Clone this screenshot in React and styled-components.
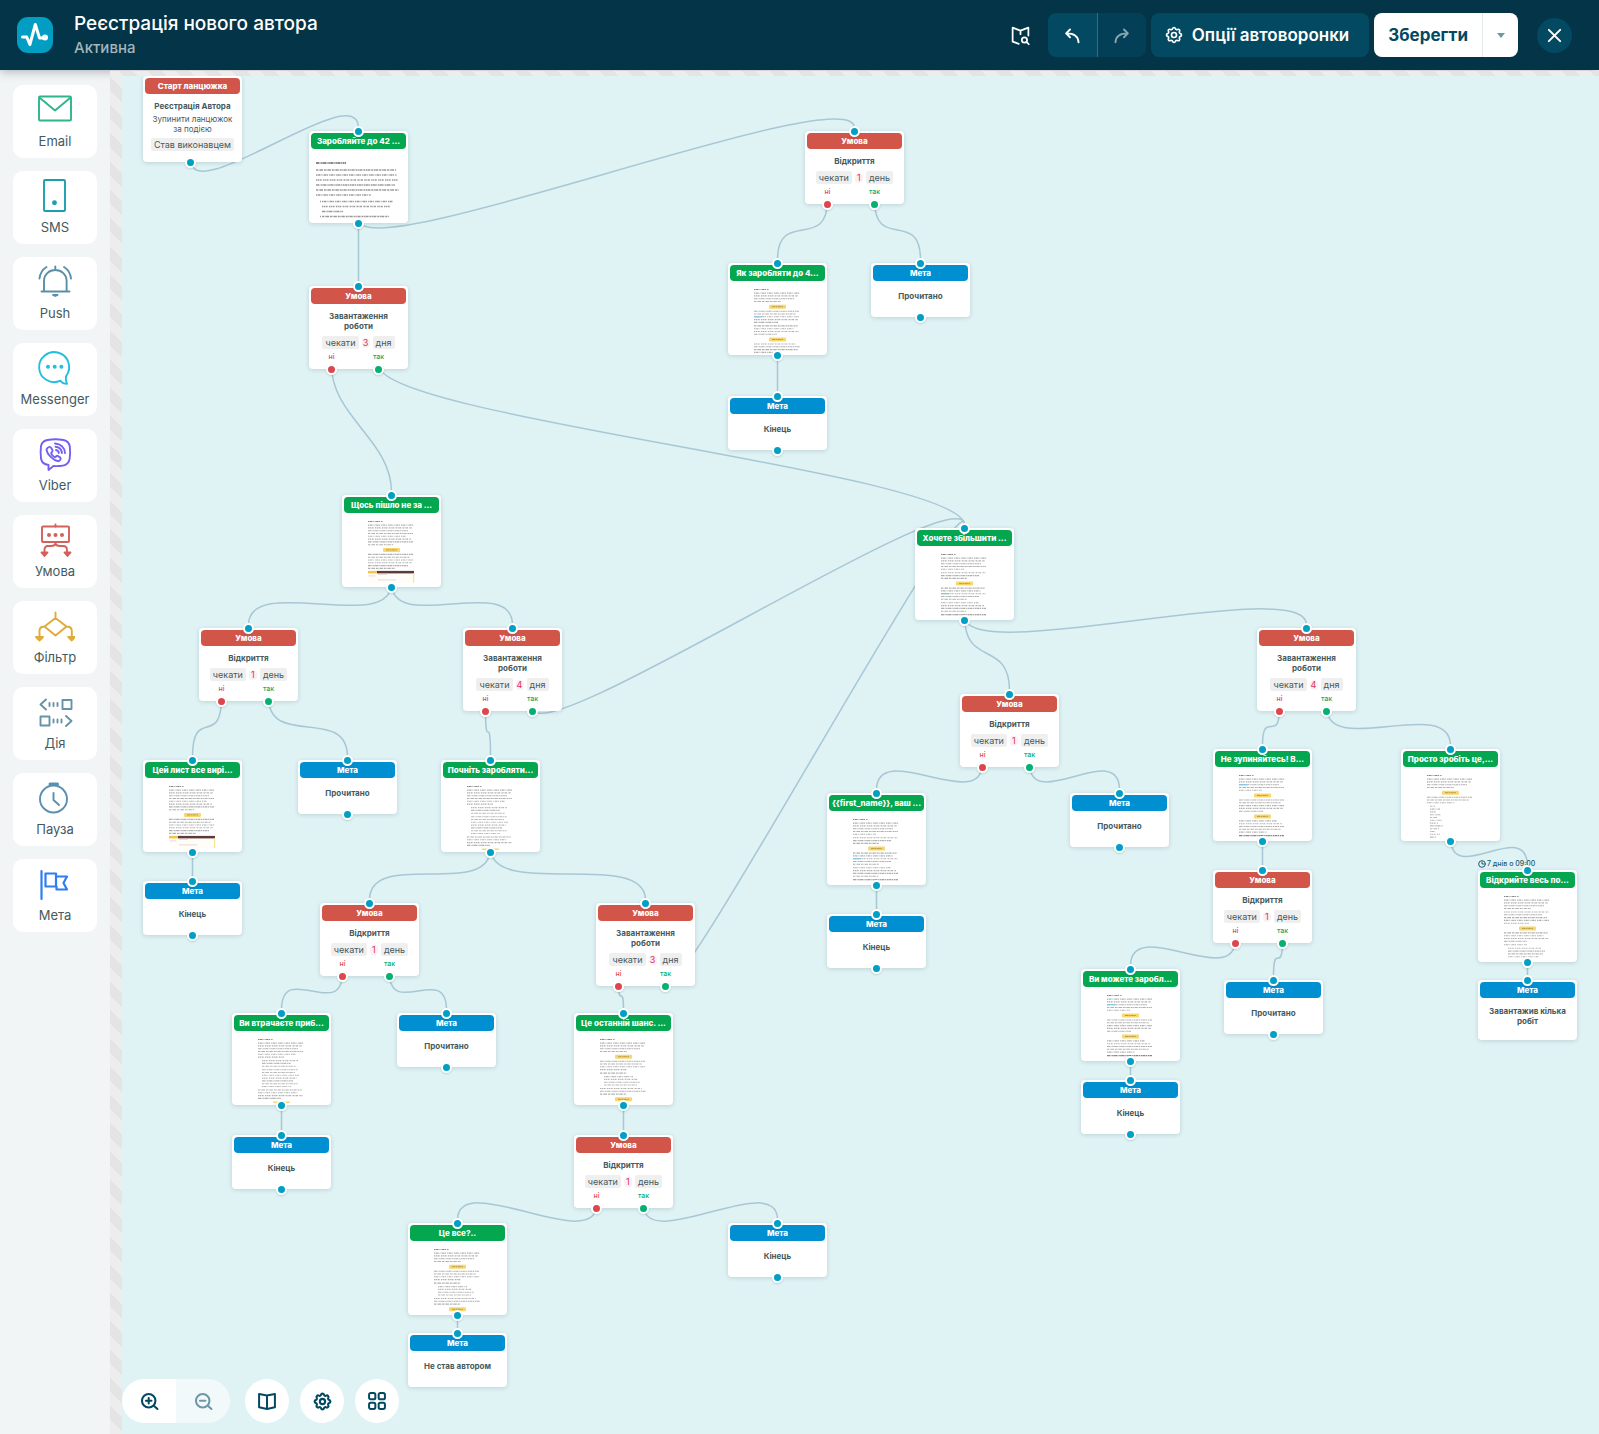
import React from 'react'
import styled, { createGlobalStyle } from 'styled-components'
import { TbSettings } from 'react-icons/tb'

const GlobalStyle = createGlobalStyle`
  * {
    box-sizing: border-box;
  }
  body {
    margin: 0;
    font-family: Inter, 'Noto Sans', sans-serif;
    color: #465a5e;
  }
  button {
    border: none;
    padding: 0;
    font-family: inherit;
    cursor: pointer;
  }
`

const Page = styled.div`
  display: flex;
  flex-direction: column;
  min-height: 100vh;
`

const Header = styled.header`
  position: relative;
  z-index: 1;
  display: flex;
  align-items: center;
  height: 70px;
  padding: 0 27px 0 17px;
  background: #033447;
  box-shadow: 0 1px 10px rgba(0, 0, 0, 0.3);
`

const Heading = styled.div`
  flex: 1;
  margin-left: 21px;
`

const Title = styled.h1`
  margin: 0;
  font-size: 19px;
  line-height: 26px;
  font-weight: 500;
  color: #fff;
`

const Status = styled.div`
  font-size: 15px;
  line-height: 22px;
  font-weight: 500;
  color: #a5b6bd;
`

const HeaderActions = styled.div`
  display: flex;
  align-items: center;
  gap: 5px;
`

const GhostButton = styled.button`
  display: flex;
  margin-right: 12px;
  background: none;
  color: #fff;
`

const ButtonGroup = styled.div`
  display: flex;
  height: 44px;
  border-radius: 8px;
  overflow: hidden;
`

const HistoryButton = styled.button`
  display: flex;
  align-items: center;
  justify-content: center;
  width: 49px;
  background: ${(p) => (p.disabled ? '#034058' : '#034961')};
  color: ${(p) => (p.disabled ? '#8ba4ae' : '#fff')};
  & + & {
    border-left: 1px solid #3b6a7d;
  }
`

const OptionsButton = styled.button`
  display: flex;
  align-items: center;
  gap: 8px;
  height: 44px;
  padding: 0 20px 0 13px;
  border-radius: 8px;
  background: #034961;
  color: #fff;
  font-size: 17px;
  font-weight: 600;
`

const SaveButton = styled.button`
  padding: 0 14px;
  background: #fff;
  color: #034961;
  font-size: 17px;
  font-weight: 700;
`

const SaveMenuButton = styled.button`
  display: flex;
  align-items: center;
  justify-content: center;
  width: 36px;
  background: #fff;
  border-left: 1px solid #e4eaec;
  color: #6f97a6;
`

const CloseButton = styled.button`
  display: flex;
  align-items: center;
  justify-content: center;
  width: 35px;
  height: 35px;
  margin-left: 14px;
  border-radius: 50%;
  background: #034961;
  color: #fff;
`

const Body = styled.div`
  flex: 1;
  display: flex;
`

const Sidebar = styled.nav`
  display: flex;
  flex-direction: column;
  gap: 13px;
  width: 110px;
  padding: 15px 13px;
  background: #f1f5f6;
`

const Tool = styled.button`
  display: flex;
  flex-direction: column;
  align-items: center;
  height: 73px;
  padding-top: 4px;
  border-radius: 10px;
  background: #fff;
  color: #465a5e;
  font-size: 13px;
  line-height: 24px;
  svg {
    color: ${(p) => p.$color};
  }
`

const Workspace = styled.main`
  position: relative;
  z-index: 2;
  flex: 1;
  display: flex;
  min-width: 0;
  padding: 5px 0 0 12px;
  margin-top: 1px;
  background: repeating-linear-gradient(45deg, #ededed 0 10px, #e4e4e4 10px 20px);
`

const Canvas = styled.div`
  position: relative;
  flex: 1;
  min-height: 1340px;
  overflow: hidden;
  background: #dff2f4;
`

const Links = styled.svg`
  position: absolute;
  inset: 0;
  width: 100%;
  height: 100%;
  fill: none;
  stroke: #a8c7d5;
  stroke-width: 1.5;
`

const Card = styled.article`
  position: absolute;
  width: 99px;
  padding: 2px;
  border-radius: 4px;
  background: #fff;
  box-shadow: 0 1px 4px rgba(40, 80, 90, 0.18);
  text-align: center;
`

const barColors = {
  start: '#d25549',
  condition: '#d25549',
  email: '#05a650',
  goal: '#008fd0',
}

const Bar = styled.h2`
  margin: 0;
  height: 16px;
  border-radius: 4px;
  background: ${(p) => barColors[p.$type]};
  color: #fff;
  font-size: 8px;
  line-height: 16px;
  font-weight: 800;
  white-space: nowrap;
`

const CardTitle = styled.div`
  font-size: 8px;
  line-height: 10px;
  font-weight: 700;
`

const CardText = styled.div`
  margin-top: 3px;
  padding: 0 2px;
  font-size: 8px;
  line-height: 10px;
`

const GoalBody = styled.div`
  display: flex;
  align-items: center;
  justify-content: center;
  min-height: 36px;
  padding: 8px 4px 14px;
  margin-bottom: -2px;
`

const StartBody = styled.div`
  padding: 7px 2px 9px;
`

const ConditionBody = styled.div`
  padding: 7px 0 6px;
`

const ChipRow = styled.div`
  display: flex;
  align-items: center;
  justify-content: center;
  gap: 3px;
  margin-top: ${(p) => p.$top}px;
`

const Chip = styled.span`
  padding: 0 3px;
  border-radius: 2px;
  background: #efefef;
  font-size: 9px;
  line-height: 13px;
`

const Count = styled.span`
  width: 8px;
  border-radius: 4px;
  background: #faeff2;
  color: #dc2f5e;
  font-size: 9px;
  line-height: 10px;
`

const Branches = styled.div`
  display: grid;
  grid-template-columns: 41px 53px;
  margin-top: 4px;
  font-size: 7px;
  line-height: 8px;
  font-weight: 500;
`

const Branch = styled.span`
  color: ${(p) => (p.$yes ? '#0cab6c' : '#dc4a50')};
`

const Dot = styled.i`
  position: absolute;
  left: ${(p) => p.$x}px;
  ${(p) => (p.$top ? 'top: -5px' : 'bottom: -6px')};
  width: 11px;
  height: 11px;
  margin-left: -5px;
  border: 2px solid #fff;
  border-radius: 50%;
  background: ${(p) => p.$color || '#009fc3'};
  box-shadow: 0 1px 2px rgba(40, 80, 90, 0.18);
`

const Schedule = styled.div`
  position: absolute;
  left: 0;
  bottom: 100%;
  display: flex;
  align-items: center;
  gap: 1px;
  color: #1c5a70;
  font-size: 7px;
  line-height: 13px;
  font-weight: 500;
  white-space: nowrap;
`

const Preview = styled.svg`
  display: block;
  width: 95px;
  height: 72px;
`

const BottomBar = styled.div`
  position: absolute;
  left: 0;
  bottom: 11px;
  display: flex;
  gap: 11px;
`

const ZoomGroup = styled.div`
  display: flex;
  margin-right: 4px;
  border-radius: 22px;
  overflow: hidden;
`

const ZoomButton = styled.button`
  display: flex;
  align-items: center;
  justify-content: center;
  width: 54px;
  height: 44px;
  background: ${(p) => (p.disabled ? '#f1f9fb' : '#fff')};
  color: ${(p) => (p.disabled ? '#6f97a6' : '#034961')};
`

const RoundButton = styled.button`
  display: flex;
  align-items: center;
  justify-content: center;
  width: 44px;
  height: 44px;
  border-radius: 50%;
  background: #fff;
  color: #034961;
`

const Svg = ({ size = 24, box = 24, stroke = 2, children }) => (
  <svg
    width={size}
    height={size}
    viewBox={`0 0 ${box} ${box}`}
    fill="none"
    stroke="currentColor"
    strokeWidth={stroke}
    strokeLinecap="round"
    strokeLinejoin="round"
    aria-hidden="true"
  >
    {children}
  </svg>
)

const ToolIcon = ({ children }) => (
  <Svg size={40} box={40} stroke={1.9}>
    {children}
  </Svg>
)

const Logo = () => (
  <svg width="36" height="36" viewBox="0 0 36 36" aria-hidden="true">
    <rect width="36" height="36" rx="11" fill="#019dc3" />
    <path
      d="M5.500 20h4.200l3.200 7.500 5.400-20 4.200 13.500h6"
      fill="none"
      stroke="#fff"
      strokeWidth="3"
      strokeLinecap="round"
      strokeLinejoin="round"
    />
    <circle cx="28" cy="20.500" r="3" fill="#fff" />
  </svg>
)

const tools = [
  {
    name: 'Email',
    color: '#2fb58c',
    icon: (
      <>
        <rect x="4" y="7.500" width="32" height="24" rx="1" />
        <path d="M5 9l15 12.500L35 9" />
      </>
    ),
  },
  {
    name: 'SMS',
    color: '#1a9fae',
    icon: (
      <>
        <rect x="9" y="5" width="21" height="31" rx="1" />
        <circle cx="19.500" cy="27.700" r="1.500" fill="currentColor" />
      </>
    ),
  },
  {
    name: 'Push',
    color: '#5b8fa8',
    icon: (
      <>
        <path d="M9 30V19.500a11.300 10.500 0 0 1 22.600 0V30M6.500 30.500h28M20.300 5.500v3.300" />
        <path d="M4.500 17.500C5 12.500 7.500 8.500 11.500 6M36 17.500C35.500 12.500 33 8.500 29 6" />
        <path d="M18 34h4.600l-2.300 1z" fill="currentColor" />
      </>
    ),
  },
  {
    name: 'Messenger',
    color: '#1fbfe0',
    icon: (
      <>
        <path d="M25.500 33.700A15 15 0 1 1 31 29.300C30.500 31.500 30.800 34 32 36.800C29.500 36.800 27 36 25.500 33.700z" />
        <g fill="currentColor" stroke="none">
          <circle cx="13" cy="19.700" r="2" />
          <circle cx="19.700" cy="19.700" r="2" />
          <circle cx="26.400" cy="19.700" r="2" />
        </g>
      </>
    ),
  },
  {
    name: 'Viber',
    color: '#7360f2',
    icon: (
      <>
        <path d="M12.500 7C17 6.200 24 6.200 28.500 7C32.500 8 34.300 10 34.800 13.500C35.300 18 35.300 22 34.600 26C33.800 30 31.800 32 28 32.600C24.500 33.100 21.500 33.200 18.500 33L13.500 37V32C9 31.500 6.700 29.500 6 25.500C5.500 21.500 5.500 17 6 13C6.700 9.500 8.500 7.700 12.500 7z" />
        <path d="M12.400 15.200C14 13.400 15.200 13.500 16.400 15.200L17.400 16.900C18.300 18.500 16.400 19.200 16.200 20.200C16.700 22.200 18 23.600 19.800 24.200C21 24 21.600 22.200 23 23L25.300 24.600C26.600 25.900 24.800 27.900 23.200 28.200C18 27.200 12.300 21.500 11.500 17C11.500 16.300 11.900 15.800 12.400 15.200z" />
        <path d="M20 10.500C25.500 10.800 29.500 14.500 30 20M20.500 13.700C24 14 26.500 16.300 27 20M21 17C22.600 17.200 23.600 18.200 23.800 20" />
      </>
    ),
  },
  {
    name: 'Умова',
    color: '#d4605c',
    icon: (
      <>
        <rect x="7" y="7.500" width="27" height="15.500" rx="1" />
        <path d="M20.500 5.500v2M20.500 23v1.500C20 27 18.500 27 16 27h-3C10.500 27 9.500 28.500 9.500 31v3M20.500 24.500C21 27 22.500 27 25 27h3C30.500 27 32 28.500 32 31v3" />
        <path d="M6.500 33.500h6l-3 3.500zM29.500 33.500h6l-3 3.500z" fill="currentColor" />
        <g fill="currentColor" stroke="none">
          <circle cx="14" cy="16" r="2" />
          <circle cx="20.500" cy="16" r="2" />
          <circle cx="27" cy="16" r="2" />
        </g>
      </>
    ),
  },
  {
    name: 'Фільтр',
    color: '#e0ab38',
    icon: (
      <>
        <path d="M20.500 7.500V13L31.500 21.500L20.500 30.500L9.500 21.500L20.500 13M9.500 21.500C6 21.500 4.500 23 4.500 26V32M31.500 21.500C35 21.500 36.800 23 36.800 26V32" />
        <path d="M1 32h7l-3.500 3.500zM33.300 32h6.500l-3 3.500z" fill="currentColor" />
      </>
    ),
  },
  {
    name: 'Дія',
    color: '#6593a8',
    icon: (
      <>
        <path d="M11 8.500L5.500 13.500L11 18.500M31 25L36.500 30L31 35M14.500 12v3M18.500 12v3M22.500 12v3M18.500 28.500v3M22.500 28.500v3M26.500 28.500v3" />
        <rect x="27.500" y="9" width="9" height="9" />
        <rect x="5.500" y="25.500" width="9" height="9" />
      </>
    ),
  },
  {
    name: 'Пауза',
    color: '#5b8fb0',
    icon: (
      <>
        <circle cx="18.500" cy="22" r="13.500" />
        <path d="M18.500 16v7l5.500 5" />
        <path d="M15 7h7.500" strokeWidth="3" />
      </>
    ),
  },
  {
    name: 'Мета',
    color: '#2f7df0',
    icon: (
      <>
        <path d="M6.500 8v28" strokeWidth="2.200" />
        <path d="M10.500 10.500H21v13H10.500zM21 13.500H32L28.500 20L32 26.500H21.500V23.500" strokeWidth="2.200" />
      </>
    ),
  },
]

const UndoIcon = () => (
  <Svg size={17}>
    <path d="M8.500 3.500L3 9l5.500 5.500M3.500 9C13.500 9 20 13 20.500 21.500" strokeWidth="2.700" />
  </Svg>
)

const RedoIcon = () => (
  <Svg size={17}>
    <path d="M15.500 3.500L21 9l-5.500 5.500M20.500 9C10.500 9 4 13 3.500 21.500" strokeWidth="2.700" />
  </Svg>
)

const MapSearchIcon = () => (
  <Svg size={21}>
    <path d="M10 21.500L3 19V3l9 3.500L21 3v9M12 6.500v4" />
    <circle cx="16.500" cy="17" r="3" />
    <path d="M19 19.500l2.500 2.500" />
  </Svg>
)

const BookIcon = () => (
  <Svg size={20} stroke={2.4}>
    <path d="M12 5.500L2.500 3.500v16l9.500 2 9.500-2v-16zM12 5.500v16" />
  </Svg>
)

const GridIcon = () => (
  <Svg size={20} stroke={2.4}>
    <rect x="2.500" y="2.500" width="7.500" height="7.500" rx="2" />
    <rect x="14" y="2.500" width="7.500" height="7.500" rx="2" />
    <rect x="2.500" y="14" width="7.500" height="7.500" rx="2" />
    <rect x="14" y="14" width="7.500" height="7.500" rx="2" />
  </Svg>
)

const ZoomIcon = ({ plus }) => (
  <Svg size={19} stroke={2.6}>
    <circle cx="11" cy="11" r="8.500" />
    <path d={plus ? 'M17.500 17.500L22 21.500M7.500 11h7M11 7.500v7' : 'M17.500 17.500L22 21.500M7.500 11h7'} />
  </Svg>
)

// Letter thumbnails: h = heading, p = paragraph, l = list, b = button, n = note, t = table.
const letters = {
  how: ['h', 'p4', 'b', 'p5+', 'p4', 'b', 'p4'],
  wrong: ['h', 'p8', 'b', 'p6', 't'],
  begin: ['h', 'p6', 'l3', 'l7', 'p4', 'b'],
  want: ['h', 'p5', 'p3', 'b', 'p5+', 'p4', 'n'],
  stop: ['h', 'p5+', 'b', 'p5', 'b', 'p5', 'n'],
  simple: ['h', 'p4', 'b', 'p3', 's12'],
  open: ['h', 'p4', 'p5', 'b', 'p4', 'p1', 'l4'],
  last: ['h', 'p4', 'b', 'p4', 'p1', 'l4', 'p3', 'b'],
}

const dashes = ['2 .6 1 .4 3 .9', '1 .5 2.500 .5 1 1.100', '1.500 .5 1 .6 2 1.300', '3 .5 1 .7 1.500 .4']
const widths = [43, 45, 42, 46, 44, 40, 45, 38]

const LetterPreview = ({ kind }) => {
  const shapes = []
  let y = 8.5
  const line = (x, w, color, n) =>
    shapes.push(
      <line key={shapes.length} x1={x} x2={x + w} y1={y} y2={y} stroke={color} strokeDasharray={dashes[n % 4]} />
    )

  if (kind === 'first') {
    y = 14
    line(5, 30, '#666', 3)
    ;[80, 81, 82, 79, 83, 55].forEach((w, i) => {
      y = 21 + i * 5
      line(5, w, '#9a9a9a', i)
    })
    ;[71, 69, 21, 67].forEach((w, i) => {
      y = 52.5 + i * 5
      line(11, w, '#9a9a9a', i + 1)
    })
    return (
      <Preview viewBox="0 0 95 72" strokeWidth="1.400">
        {shapes}
        <path d="M9 52.500h1M9 67.500h1" stroke="#9a9a9a" />
      </Preview>
    )
  }

  letters[kind].forEach((block, b) => {
    const type = block[0]
    const count = parseInt(block.slice(1), 10) || 1
    if (type === 'h') {
      line(24, 15, '#888', 1)
      y += 3.6
    } else if (type === 'n') {
      line(24, 45, '#888', 3)
      y += 3.6
    } else if (type === 'b') {
      y += 1.7
      shapes.push(<rect key={shapes.length} x="39" y={y - 2} width="17" height="4" rx=".8" fill="#f8d86e" />)
      shapes.push(
        <line key={shapes.length} x1="42" x2="53" y1={y} y2={y} stroke="#b89d4c" strokeWidth="1" strokeDasharray="3 .5 2 .4" />
      )
      y += 4.5
    } else if (type === 't') {
      shapes.push(
        <g key={shapes.length}>
          <rect x="24" y={y - 1} width="46" height="12" fill="#fffdf8" />
          <rect x="24" y={y - 1} width="9" height="2.500" fill="#f6c544" />
          <rect x="33" y={y - 1} width="37" height="2.500" fill="#5c3b38" />
          <path d={`M24.500 ${y + 4}h7M34 ${y + 2.5}h9M34 ${y + 8}h18`} stroke="#e3cfcf" strokeWidth=".8" />
          <path d={`M69.700 ${y + 1}v10`} stroke="#f6d362" strokeWidth=".8" />
        </g>
      )
    } else {
      for (let i = 0; i < count; i++) {
        const w = widths[(i + b * 3) % 8]
        if (type === 'l') line(28, w - 9, '#b8b8b8', i + b)
        else if (type === 's') line(27, 5 + ((i * 5) % 9), '#b8b8b8', i + b)
        else line(24, i === count - 1 ? w * 0.6 : w, '#b0b0b0', i + b)
        if (block.endsWith('+') && i === 2) {
          shapes.push(<path key={shapes.length} d={`M24 ${y}h8`} stroke="#7cc4e6" />)
        }
        y += 2.8
      }
      y += 0.7
    }
  })
  return (
    <Preview viewBox="0 0 95 72" strokeWidth="1.100">
      {shapes}
    </Preview>
  )
}

const nodes = {
  start: { type: 'start', x: 21, y: 0, title: 'Старт ланцюжка' },
  earn: { type: 'email', x: 187, y: 55, title: 'Заробляйте до 42 ...', letter: 'first' },
  upload: { type: 'condition', x: 187, y: 210, upload: true, wait: 3 },
  opened: { type: 'condition', x: 683, y: 55, wait: 1 },
  how: { type: 'email', x: 606, y: 187, title: 'Як заробляти до 4...', letter: 'how' },
  howRead: { type: 'goal', x: 749, y: 187, text: 'Прочитано' },
  howEnd: { type: 'goal', x: 606, y: 320, text: 'Кінець' },
  wrong: { type: 'email', x: 220, y: 419, title: 'Щось пішло не за ...', letter: 'wrong' },
  wrongOpened: { type: 'condition', x: 77, y: 552, wait: 1 },
  wrongUpload: { type: 'condition', x: 341, y: 552, upload: true, wait: 4 },
  letter: { type: 'email', x: 21, y: 684, title: 'Цей лист все вирі...', letter: 'wrong' },
  letterRead: { type: 'goal', x: 176, y: 684, text: 'Прочитано' },
  letterEnd: { type: 'goal', x: 21, y: 805, text: 'Кінець' },
  begin: { type: 'email', x: 319, y: 684, title: 'Почніть заробляти...', letter: 'begin' },
  beginOpened: { type: 'condition', x: 198, y: 827, wait: 1 },
  beginUpload: { type: 'condition', x: 474, y: 827, upload: true, wait: 3 },
  lose: { type: 'email', x: 110, y: 937, title: 'Ви втрачаєте приб...', letter: 'begin' },
  loseRead: { type: 'goal', x: 275, y: 937, text: 'Прочитано' },
  loseEnd: { type: 'goal', x: 110, y: 1059, text: 'Кінець' },
  last: { type: 'email', x: 452, y: 937, title: 'Це останній шанс. ...', letter: 'last' },
  lastOpened: { type: 'condition', x: 452, y: 1059, wait: 1 },
  all: { type: 'email', x: 286, y: 1147, title: 'Це все?..', letter: 'last' },
  allEnd: { type: 'goal', x: 606, y: 1147, text: 'Кінець' },
  notAuthor: { type: 'goal', x: 286, y: 1257, text: 'Не став автором', final: true },
  want: { type: 'email', x: 793, y: 452, title: 'Хочете збільшити ...', letter: 'want' },
  wantOpened: { type: 'condition', x: 838, y: 618, wait: 1 },
  name: { type: 'email', x: 705, y: 717, title: '{{first_name}}, ваш ...', letter: 'want' },
  nameRead: { type: 'goal', x: 948, y: 717, text: 'Прочитано' },
  nameEnd: { type: 'goal', x: 705, y: 838, text: 'Кінець' },
  wantUpload: { type: 'condition', x: 1135, y: 552, upload: true, wait: 4 },
  stop: { type: 'email', x: 1091, y: 673, title: 'Не зупиняйтесь! В...', letter: 'stop' },
  simple: { type: 'email', x: 1279, y: 673, title: 'Просто зробіть це,...', letter: 'simple' },
  stopOpened: { type: 'condition', x: 1091, y: 794, wait: 1 },
  open: { type: 'email', x: 1356, y: 794, title: 'Відкрийте весь по...', letter: 'open', schedule: '7 днів о 09:00' },
  stopRead: { type: 'goal', x: 1102, y: 904, text: 'Прочитано' },
  uploaded: { type: 'goal', x: 1356, y: 904, text: 'Завантажив кілька робіт', final: true },
  can: { type: 'email', x: 959, y: 893, title: 'Ви можете заробл...', letter: 'stop' },
  canEnd: { type: 'goal', x: 959, y: 1004, text: 'Кінець' },
}

const links = [
  ['start', 'out', 'earn'],
  ['earn', 'out', 'upload'],
  ['earn', 'out', 'opened'],
  ['opened', 'no', 'how'],
  ['opened', 'yes', 'howRead'],
  ['how', 'out', 'howEnd'],
  ['upload', 'no', 'wrong'],
  ['upload', 'yes', 'want'],
  ['wrong', 'out', 'wrongOpened'],
  ['wrong', 'out', 'wrongUpload'],
  ['wrongOpened', 'no', 'letter'],
  ['wrongOpened', 'yes', 'letterRead'],
  ['wrongUpload', 'no', 'begin'],
  ['wrongUpload', 'yes', 'want'],
  ['letter', 'out', 'letterEnd'],
  ['begin', 'out', 'beginOpened'],
  ['begin', 'out', 'beginUpload'],
  ['beginOpened', 'no', 'lose'],
  ['beginOpened', 'yes', 'loseRead'],
  ['lose', 'out', 'loseEnd'],
  ['beginUpload', 'no', 'last'],
  ['beginUpload', 'yes', 'want'],
  ['last', 'out', 'lastOpened'],
  ['lastOpened', 'no', 'all'],
  ['lastOpened', 'yes', 'allEnd'],
  ['all', 'out', 'notAuthor'],
  ['want', 'out', 'wantOpened'],
  ['want', 'out', 'wantUpload'],
  ['wantOpened', 'no', 'name'],
  ['wantOpened', 'yes', 'nameRead'],
  ['name', 'out', 'nameEnd'],
  ['wantUpload', 'no', 'stop'],
  ['wantUpload', 'yes', 'simple'],
  ['stop', 'out', 'stopOpened'],
  ['simple', 'out', 'open'],
  ['stopOpened', 'no', 'can'],
  ['stopOpened', 'yes', 'stopRead'],
  ['open', 'out', 'uploaded'],
  ['can', 'out', 'canEnd'],
]

const heights = { start: 87, email: 92, goal: 54, condition: 73 }
const ports = { out: 49.5, no: 22.5, yes: 69.5 }

const linkPath = ([from, port, to]) => {
  const a = nodes[from]
  const b = nodes[to]
  const x1 = a.x + (a.type === 'start' ? 47.5 : ports[port])
  const y1 = a.y + heights[a.type] + (a.upload ? 10 : 0) - 4
  const x2 = b.x + ports.out
  const y2 = b.y - 3
  // short links bend less, or they would fold over themselves
  const bend = Math.min(52, Math.max(Math.abs(y2 - y1), 0.7 * Math.hypot(x2 - x1, y2 - y1)))
  return `M${x1} ${y1}C${x1} ${y1 + bend} ${x2} ${y2 - bend} ${x2} ${y2}`
}

const Node = ({ node }) => {
  const { type } = node
  const place = { left: node.x, top: node.y }

  if (type === 'start') {
    return (
      <Card style={place}>
        <Bar $type={type}>{node.title}</Bar>
        <StartBody>
          <CardTitle>Реєстрація Автора</CardTitle>
          <CardText>
            Зупинити ланцюжок
            <br />
            за подією
          </CardText>
          <ChipRow $top={4}>
            <Chip>Став виконавцем</Chip>
          </ChipRow>
        </StartBody>
        <Dot $x={47} />
      </Card>
    )
  }

  if (type === 'condition') {
    return (
      <Card style={place}>
        <Bar $type={type}>Умова</Bar>
        <ConditionBody>
          <CardTitle>
            {node.upload ? (
              <>
                Завантаження
                <br />
                роботи
              </>
            ) : (
              'Відкриття'
            )}
          </CardTitle>
          <ChipRow $top={5}>
            <Chip>чекати</Chip>
            <Count>{node.wait}</Count>
            <Chip>{node.wait === 1 ? 'день' : 'дня'}</Chip>
          </ChipRow>
          <Branches>
            <Branch>ні</Branch>
            <Branch $yes>так</Branch>
          </Branches>
        </ConditionBody>
        <Dot $x={49} $top />
        <Dot $x={22} $color="#dc474e" />
        <Dot $x={69} $color="#04b172" />
      </Card>
    )
  }

  return (
    <Card style={place}>
      {node.schedule && (
        <Schedule>
          <Svg size={8} stroke={3}>
            <circle cx="12" cy="12" r="10" />
            <path d="M12 6v6h5" />
          </Svg>
          {node.schedule}
        </Schedule>
      )}
      <Bar $type={type}>{type === 'goal' ? 'Мета' : node.title}</Bar>
      {type === 'email' ? (
        <LetterPreview kind={node.letter} />
      ) : (
        <GoalBody>
          <CardTitle>{node.text}</CardTitle>
        </GoalBody>
      )}
      <Dot $x={49} $top />
      {!node.final && <Dot $x={49} />}
    </Card>
  )
}

const App = () => {
  return (
    <>
      <GlobalStyle />
      <Page>
        <Header>
          <Logo />
          <Heading>
            <Title>Реєстрація нового автора</Title>
            <Status>Активна</Status>
          </Heading>
          <HeaderActions>
            <GhostButton aria-label="Карта">
              <MapSearchIcon />
            </GhostButton>
            <ButtonGroup>
              <HistoryButton aria-label="Скасувати">
                <UndoIcon />
              </HistoryButton>
              <HistoryButton aria-label="Повторити" disabled>
                <RedoIcon />
              </HistoryButton>
            </ButtonGroup>
            <OptionsButton>
              <TbSettings size={20} />
              Опції автоворонки
            </OptionsButton>
            <ButtonGroup>
              <SaveButton>Зберегти</SaveButton>
              <SaveMenuButton aria-label="Інші дії">
                <svg width="8" height="5" viewBox="0 0 8 5" aria-hidden="true">
                  <path d="M0 0h8L4 5z" fill="currentColor" />
                </svg>
              </SaveMenuButton>
            </ButtonGroup>
            <CloseButton aria-label="Закрити">
              <Svg size={17} stroke={2.8}>
                <path d="M4 4l16 16M20 4L4 20" />
              </Svg>
            </CloseButton>
          </HeaderActions>
        </Header>
        <Body>
          <Sidebar>
            {tools.map((tool) => (
              <Tool key={tool.name} $color={tool.color}>
                <ToolIcon>{tool.icon}</ToolIcon>
                {tool.name}
              </Tool>
            ))}
          </Sidebar>
          <Workspace>
            <Canvas>
              <Links>
                {links.map((link) => (
                  <path key={link.join()} d={linkPath(link)} />
                ))}
              </Links>
              {Object.keys(nodes).map((id) => (
                <Node key={id} node={nodes[id]} />
              ))}
              <BottomBar>
                <ZoomGroup>
                  <ZoomButton aria-label="Збільшити">
                    <ZoomIcon plus />
                  </ZoomButton>
                  <ZoomButton aria-label="Зменшити" disabled>
                    <ZoomIcon />
                  </ZoomButton>
                </ZoomGroup>
                <RoundButton aria-label="Довідка">
                  <BookIcon />
                </RoundButton>
                <RoundButton aria-label="Налаштування">
                  <TbSettings size={21} strokeWidth={2.4} />
                </RoundButton>
                <RoundButton aria-label="Сітка">
                  <GridIcon />
                </RoundButton>
              </BottomBar>
            </Canvas>
          </Workspace>
        </Body>
      </Page>
    </>
  )
}

export default App
